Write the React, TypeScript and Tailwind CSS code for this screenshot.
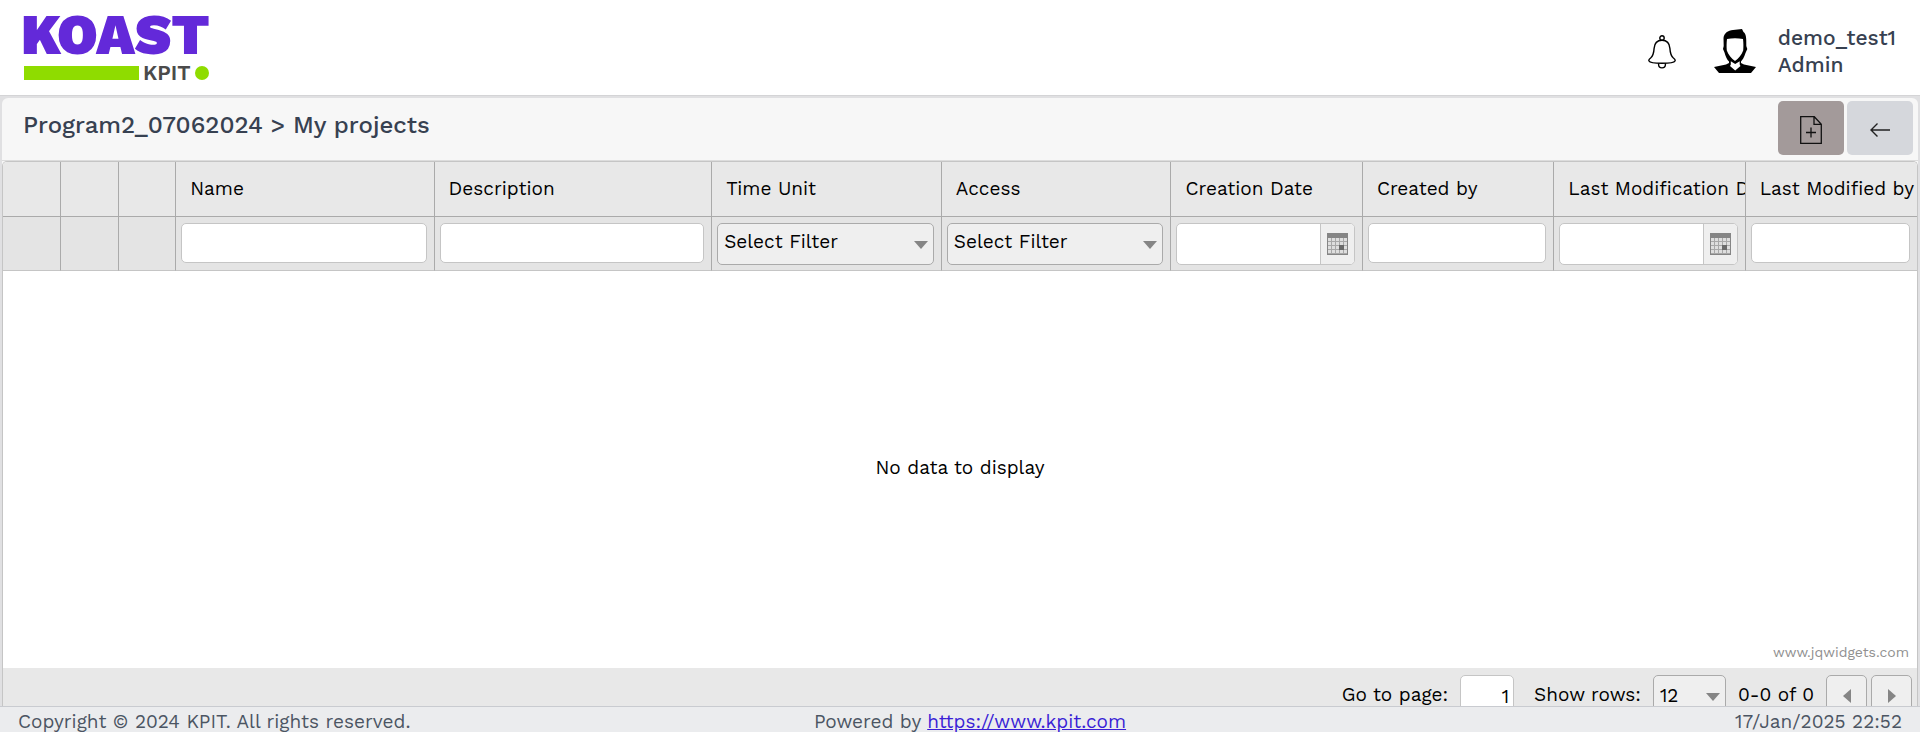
import React from "react";

type Column = { label: string; width: string; filter: "none" | "text" | "select" | "date" };

const columns: Column[] = [
  { label: "", width: "w-[3%]", filter: "none" },
  { label: "", width: "w-[3%]", filter: "none" },
  { label: "", width: "w-[3%]", filter: "none" },
  { label: "Name", width: "w-[13.5%]", filter: "text" },
  { label: "Description", width: "w-[14.5%]", filter: "text" },
  { label: "Time Unit", width: "w-[12%]", filter: "select" },
  { label: "Access", width: "w-[12%]", filter: "select" },
  { label: "Creation Date", width: "w-[10%]", filter: "date" },
  { label: "Created by", width: "w-[10%]", filter: "text" },
  { label: "Last Modification Date", width: "w-[10%]", filter: "date" },
  { label: "Last Modified by", width: "w-[9%]", filter: "text" },
];

function Logo() {
  return (
    <svg viewBox="0 0 186 64" className="h-16 w-[186px] overflow-visible" role="img" aria-label="KOAST KPIT">
      <text x="-3" y="38" fontFamily="'Work Sans', Inter, sans-serif" fontWeight="900" fontSize="56" fill="#6329d9">
        KOAST
      </text>
      <rect x="0" y="50" width="115" height="14" fill="#8fdc00" />
      <text x="119" y="64" fontFamily="'Work Sans', Inter, sans-serif" fontWeight="600" fontSize="21" fill="#4b4b4b">
        KPIT
      </text>
      <circle cx="178" cy="57" r="7" fill="#8fdc00" />
    </svg>
  );
}

function BellIcon() {
  return (
    <svg viewBox="0 0 28 34" className="h-[34px] w-7" fill="none" stroke="#000" strokeWidth="1.4" aria-hidden="true">
      <circle cx="14" cy="3" r="2.2" />
      <path d="M14 5.200c-5 0-7.600 3.400-7.900 8.200-.3 5-.8 7.400-3.500 9.600C1.200 24 .5 25 1 26c.6 1.300 6 2.300 13 2.300S26.400 27.300 27 26c.5-1-.2-2-1.600-3-2.700-2.200-3.200-4.600-3.500-9.600-.3-4.800-2.900-8.200-7.900-8.200Z" />
      <path d="M10.600 28.200v1.300a3.400 3.400 0 0 0 6.800 0v-1.300" />
    </svg>
  );
}

function UserIcon() {
  return (
    <svg viewBox="0 0 42 44" className="h-11 w-[42px]" aria-hidden="true">
      <path
        fill="#000"
        fillRule="evenodd"
        d="M9.500 9C10 4 14 1.500 19 1L28 0l1.500 3C32 5 32.500 8 32.300 17l1 3-1.800 4c-1.200 4-3 7-4.500 8.500V34l3 1.500L42 38l-5 6H5l-5-6 12-2.500 3-1.500v-1.500C13 31 11.500 27 10.500 23.500L9 20l.700-3ZM13 10c-.5 4-.5 8-.2 11.500C14.500 26 17.500 29.500 21 32c3.500-2.500 6.500-6 8.200-10.500.3-3.500.3-7.500-.2-11.500-5-1-11-1-16 0ZM16.800 32.200v3.300l-.8 1.500 5.200 4.500 5.300-4.500-.8-1.500v-3.300L21.200 35Z"
      />
    </svg>
  );
}

function NewFileIcon() {
  return (
    <svg viewBox="0 0 22 28" className="h-7 w-[22px]" fill="none" stroke="#111" strokeWidth="1.3" aria-hidden="true">
      <path d="M.7.7h13.600l7 7.600v19H.7ZM14 .7v7.600h7.300M11 11.500v10M6 16.500h10" />
    </svg>
  );
}

function BackIcon() {
  return (
    <svg viewBox="0 0 20 14" className="h-3.5 w-5" fill="none" stroke="#222" strokeWidth="1.4" aria-hidden="true">
      <path d="M20 7H1M7.500.5 1 7l6.500 6.500" />
    </svg>
  );
}

function CalendarIcon() {
  return (
    <svg viewBox="0 0 21 22" className="h-[22px] w-[21px]" aria-hidden="true">
      <rect width="21" height="22" fill="#858585" />
      <rect x="1" y="5" width="19" height="16" fill="#a8a8a8" />
      <g fill="#dedede">
        {[5, 9, 13, 17].map((y) =>
          [1, 5, 9, 13, 17].map((x) => <rect key={x + "-" + y} x={x} y={y} width="3" height="3" />),
        )}
      </g>
      <rect x="12" y="12" width="5" height="5" fill="#6a6a6a" />
    </svg>
  );
}

function SelectBox({ label, id, options, className }: { label: string; id: string; options: string[]; className: string }) {
  return (
    <div className="relative">
      <select
        id={id}
        aria-label={label}
        className={"w-full appearance-none rounded-[5px] border border-[#aaa] bg-[#efefef] text-black " + className}
      >
        {options.map((o) => (
          <option key={o}>{o}</option>
        ))}
      </select>
      <svg viewBox="0 0 14 8" className="pointer-events-none absolute right-1.5 top-[18px] h-2 w-3.5" aria-hidden="true">
        <path d="M0 0h14L7 8Z" fill="#858585" />
      </svg>
    </div>
  );
}

function Filter({ column }: { column: Column }) {
  const label = "Filter " + column.label;
  const id = "filter-" + column.label.toLowerCase().replace(/ /g, "-");
  if (column.filter === "text") {
    return (
      <input
        id={id}
        aria-label={label}
        type="text"
        className="block h-10 w-full rounded-[5px] border border-[#c5c5c5] bg-white px-2"
      />
    );
  }
  if (column.filter === "select") {
    return <SelectBox id={id} label={label} options={["Select Filter"]} className="h-[42px] pb-1 pl-1.5" />;
  }
  if (column.filter === "date") {
    return (
      <div className="flex h-[42px] overflow-hidden rounded-[5px] border border-[#c5c5c5] bg-white">
        <input id={id} aria-label={label} type="text" className="min-w-0 flex-1 px-2" />
        <button
          type="button"
          aria-label={"Open calendar for " + column.label}
          className="flex w-[34px] items-center justify-center border-l border-[#c5c5c5] bg-[#efefef]"
        >
          <CalendarIcon />
        </button>
      </div>
    );
  }
  return null;
}

export default function App() {
  return (
    <div className="flex h-screen flex-col overflow-hidden bg-[#e0e0e2] font-['Work_Sans',Inter,sans-serif] text-black">
      <header className="flex h-24 shrink-0 items-start justify-between border-b border-[#d4d4d6] bg-white pl-6 pr-6">
        <div className="pt-4">
          <Logo />
        </div>
        <div className="flex items-center pt-6">
          <button type="button" aria-label="Notifications" className="mr-[38px] pt-0.5">
            <BellIcon />
          </button>
          <UserIcon />
          <div className="ml-[22px] text-[21px] font-medium leading-[27px] text-[#374151]">
            <p>demo_test1</p>
            <p>Admin</p>
          </div>
        </div>
      </header>

      <main className="mx-0.5 mt-0.5 flex min-h-0 flex-1 flex-col overflow-hidden rounded-t-md bg-[#f7f7f7]">
        <div className="flex h-[63px] shrink-0 items-start justify-between border-b border-[#dcdcdc] pl-[21px] pr-[5px]">
          <h1 className="pt-[11px] text-2xl font-medium text-[#374151]">Program2_07062024 &gt; My projects</h1>
          <div className="flex gap-[3px] pt-[3px]">
            <button
              type="button"
              aria-label="New project"
              className="flex h-[54px] w-[66px] items-center justify-center rounded-[5px] bg-[#a39a9a] pt-1"
            >
              <NewFileIcon />
            </button>
            <button
              type="button"
              aria-label="Back"
              className="flex h-[54px] w-[66px] items-center justify-center rounded-[5px] bg-[#d5d7dc] pt-1"
            >
              <BackIcon />
            </button>
          </div>
        </div>

        <section className="flex min-h-0 flex-1 flex-col overflow-hidden rounded-t-[5px] border border-b-0 border-[#c5c5c5] bg-white">
          <table className="w-full shrink-0 table-fixed border-separate border-spacing-0 text-[19px]">
            <thead>
              <tr className="h-[55px] bg-[#e8e8e8]">
                {columns.map((c, i) => (
                  <th
                    key={i}
                    scope="col"
                    className={
                      c.width +
                      " overflow-hidden whitespace-nowrap border-b border-l border-[#aaa] pl-3.5 text-left font-normal first:border-l-0"
                    }
                  >
                    {c.label}
                  </th>
                ))}
              </tr>
              <tr className="h-[54px] bg-[#e4e4e4]">
                {columns.map((c, i) => (
                  <td
                    key={i}
                    className="border-b border-l border-b-[#c5c5c5] border-l-[#aaa] pl-[5px] pr-[7px] pt-1.5 align-top first:border-l-0"
                  >
                    <Filter column={c} />
                  </td>
                ))}
              </tr>
            </thead>
          </table>
          <div className="flex min-h-0 flex-1 flex-col justify-between">
            <div className="h-5" />
            <p className="text-center text-[19px] leading-7">No data to display</p>
            <p className="self-end pb-2 pr-2 text-sm leading-4 text-[#909090]">www.jqwidgets.com</p>
          </div>
          <div className="flex h-[38px] shrink-0 items-start justify-end overflow-hidden bg-[#e8e8e8] pr-[5px] pt-[7px] text-[19px]">
            <label htmlFor="page" className="leading-[40px]">
              Go to page:
            </label>
            <input
              id="page"
              type="text"
              defaultValue="1"
              className="ml-3 h-[42px] w-[54px] rounded-[5px] border border-[#c5c5c5] bg-white px-1 text-right"
            />
            <label htmlFor="rows" className="ml-5 mr-3 leading-[40px]">
              Show rows:
            </label>
            <div className="w-[73px]">
              <SelectBox id="rows" label="Show rows" options={["12"]} className="h-[42px] pl-1.5" />
            </div>
            <span className="mx-3 leading-[40px]">0-0 of 0</span>
            <button
              type="button"
              aria-label="Previous page"
              className="mr-1 flex h-[42px] w-[41px] items-center justify-center rounded-[5px] border border-[#aaa] bg-[#efefef]"
            >
              <svg viewBox="0 0 8 14" className="h-3.5 w-2" aria-hidden="true">
                <path d="M8 0v14L0 7Z" fill="#858585" />
              </svg>
            </button>
            <button
              type="button"
              aria-label="Next page"
              className="flex h-[42px] w-[41px] items-center justify-center rounded-[5px] border border-[#aaa] bg-[#efefef]"
            >
              <svg viewBox="0 0 8 14" className="h-3.5 w-2" aria-hidden="true">
                <path d="M0 0v14l8-7Z" fill="#858585" />
              </svg>
            </button>
          </div>
        </section>
      </main>

      <footer className="grid h-[26px] shrink-0 grid-cols-3 items-start whitespace-nowrap border-t border-[#c9cbd0] bg-[#ebecee] px-[18px] text-[19px] leading-[30px] text-[#4b5563]">
        <span>Copyright © 2024 KPIT. All rights reserved.</span>
        <span className="pl-5 text-center">
          Powered by{" "}
          <a href="https://www.kpit.com" className="text-[#3a1fd6] underline">
            https://www.kpit.com
          </a>
        </span>
        <time className="text-right">17/Jan/2025 22:52</time>
      </footer>
    </div>
  );
}
